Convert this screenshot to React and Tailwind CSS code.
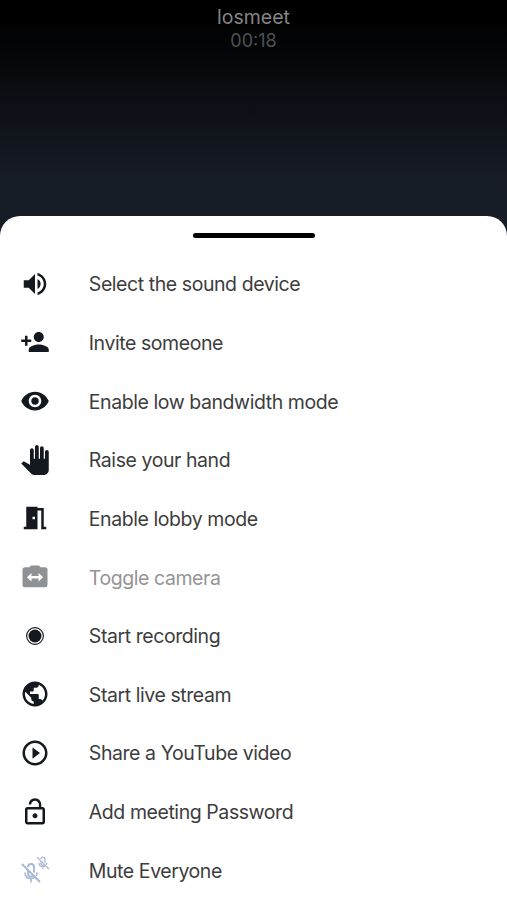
import { MdLockOpen, MdMeetingRoom, MdPanTool, MdPersonAdd, MdPlayCircleOutline, MdPublic, MdVisibility, MdVolumeUp } from 'react-icons/md'

const items = [
  { label: 'Select the sound device', Icon: MdVolumeUp },
  { label: 'Invite someone', Icon: MdPersonAdd },
  { label: 'Enable low bandwidth mode', Icon: MdVisibility },
  { label: 'Raise your hand', Icon: MdPanTool },
  { label: 'Enable lobby mode', Icon: MdMeetingRoom },
  { label: 'Toggle camera', Icon: ToggleCameraIcon, disabled: true },
  { label: 'Start recording', Icon: RecordIcon },
  { label: 'Start live stream', Icon: MdPublic },
  { label: 'Share a YouTube video', Icon: MdPlayCircleOutline },
  { label: 'Add meeting Password', Icon: MdLockOpen },
  { label: 'Mute Everyone', Icon: MuteEveryoneIcon },
]

export default function App(){
  return (
    <div className="h-[900px] w-full overflow-hidden flex flex-col bg-[#171d27] font-['Inter','Liberation_Sans',sans-serif]">
      <header className="h-[216px] shrink-0 flex flex-col items-center pt-[5px] bg-linear-to-b/srgb from-black from-8% to-[#171d27] to-85%">
        <h1 className="text-[19.5px] leading-6 text-[#858585]">losmeet</h1>
        <p className="text-[18px] leading-[23px] text-[#505153]">00:18</p>
      </header>
      <main className="flex-1 rounded-t-[20px] bg-white">
        <div className="h-[38.5px] pt-[17px]">
          <div className="mx-auto h-[5px] w-[122px] rounded-full bg-black" />
        </div>
        <ul>
          {items.map(item => <MenuItem key={item.label} {...item} />)}
        </ul>
      </main>
    </div>
  )
}

function MenuItem({label, Icon, disabled}){
  return (
    <li className={`h-[58.65px] flex items-center pl-5 gap-[38.8px] ${disabled ? 'text-[#8f9295]' : 'text-[#13191e]'}`}>
      <Icon className="size-[30px] shrink-0" />
      <span className={`pt-px text-[19.5px] leading-6 tracking-[-0.43px] whitespace-nowrap ${disabled ? 'text-[#949494]' : 'text-[#3d3d3d]'}`}>{label}</span>
    </li>
  )
}

function ToggleCameraIcon({className}){
  return (
    <svg viewBox="0 0 24 24" fill="currentColor" className={className}>
      <path fillRule="evenodd" d="M4 4.200h3.600L8.800 2.700h6.400l1.200 1.500H20a2 2 0 0 1 2 2v12a2 2 0 0 1-2 2H4a2 2 0 0 1-2-2v-12a2 2 0 0 1 2-2zM9.200 8.800L5.500 12.200l3.700 3.400v-2.400h5.600v2.400l3.700-3.400-3.700-3.400v2.400H9.200z" />
    </svg>
  )
}

function RecordIcon({className}){
  return (
    <svg viewBox="0 0 24 24" fill="currentColor" className={className}>
      <circle cx="12" cy="12" r="5.200" />
      <circle cx="12" cy="12" r="6.700" fill="none" stroke="currentColor" strokeWidth="0.900" />
    </svg>
  )
}

function MuteEveryoneIcon({className}){
  return (
    <svg viewBox="0 0 30 30" fill="none" stroke="#a9b8d7" className={className}>
      <g transform="translate(0.500 0.500)">
        <MutedMic />
      </g>
      <g transform="translate(16 -3.500) scale(0.660)">
        <MutedMic />
      </g>
    </svg>
  )
}

function MutedMic(){
  return (
    <>
      <path strokeWidth="1.900" d="M1.500 8.500l18 18" />
      <path strokeWidth="2" d="M7.500 11.500a3 3 0 0 1 6 0v5.500M7.500 15v3a3 3 0 0 0 5 2.300" />
      <path strokeWidth="1.700" d="M4.500 17c0 4 2.500 6 6 6 1.500 0 2.700-.4 3.700-1.100M10.500 23v4M16.500 17c0 1.400-.3 2.500-.9 3.400" />
    </>
  )
}
